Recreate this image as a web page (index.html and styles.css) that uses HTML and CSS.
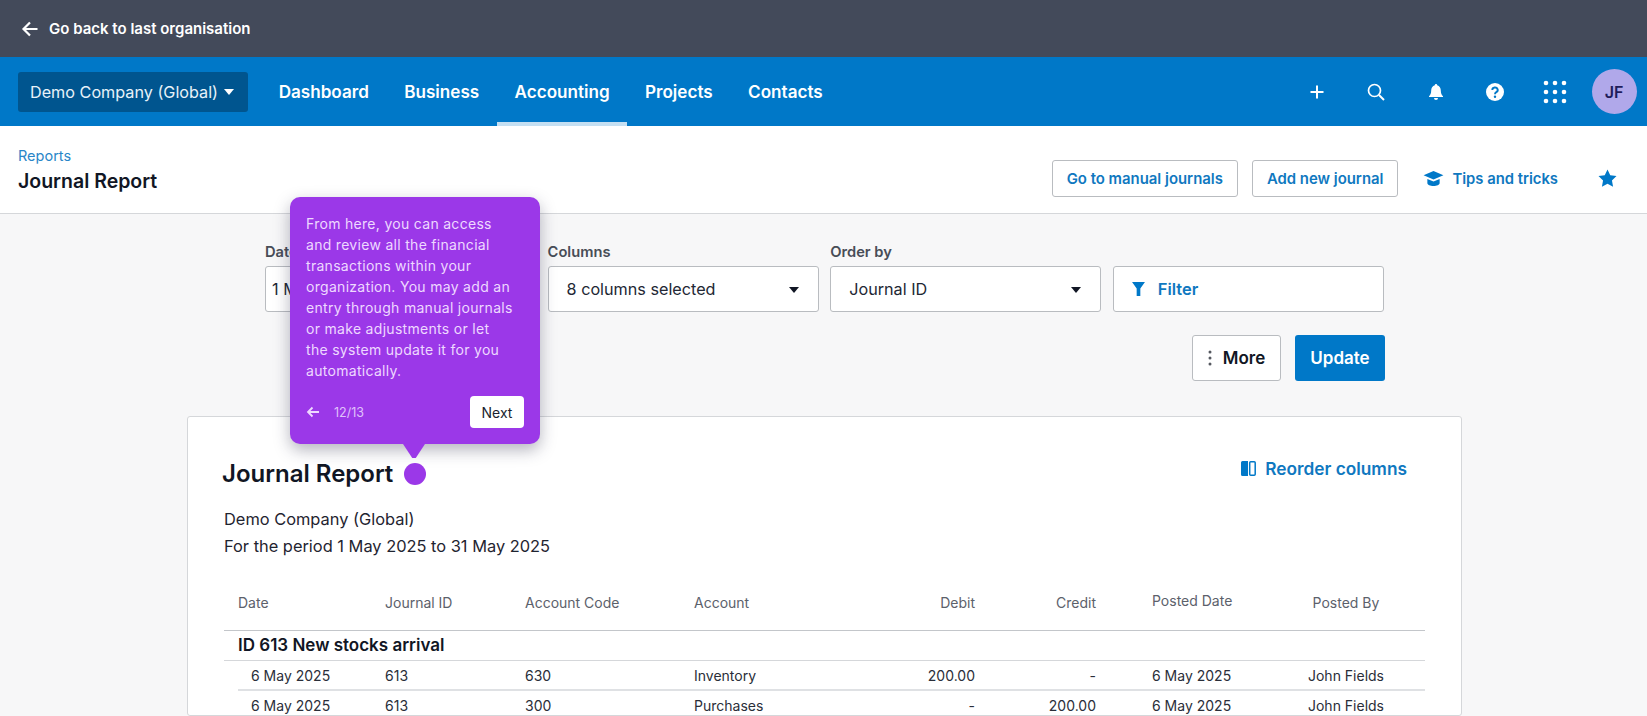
FILE: index.html
```html
<!DOCTYPE html>
<html lang="en">
<head>
<meta charset="utf-8">
<title>Journal Report</title>
<link rel="stylesheet" href="styles.css">
</head>
<body>
<div class="backbar">
  <svg class="back-arrow" viewBox="0 0 18 18" width="18" height="18"><path d="M16.5 9H3M9 2.5 2.5 9 9 15.5" fill="none" stroke="#fff" stroke-width="2.2"/></svg>
  <span>Go back to last organisation</span>
</div>
<nav class="topnav">
  <button class="org">Demo Company (Global)<span class="org-caret"></span></button>
  <a class="tab">Dashboard</a>
  <a class="tab">Business</a>
  <a class="tab active">Accounting</a>
  <a class="tab">Projects</a>
  <a class="tab">Contacts</a>
  <div class="nav-icons">
    <span class="nav-icon"><svg viewBox="0 0 16 16" width="16" height="16"><path d="M8 1.5v13M1.5 8h13" stroke="#fff" stroke-width="2"/></svg></span>
    <span class="nav-icon"><svg viewBox="0 0 18 18" width="18" height="18"><circle cx="7.5" cy="7.5" r="6" fill="none" stroke="#fff" stroke-width="1.7"/><path d="m12 12 5 5" stroke="#fff" stroke-width="2"/></svg></span>
    <span class="nav-icon"><svg viewBox="0 0 16 18" width="16" height="18"><path d="M8 1a1.2 1.2 0 0 1 1.2 1.3C11.6 3 12.8 5 12.8 7.500c0 3 .9 4.400 2.200 5.700v.8H1v-.8c1.300-1.300 2.200-2.700 2.200-5.700C3.200 5 4.400 3 6.800 2.300A1.200 1.200 0 0 1 8 1ZM6 15h4a2 2 0 0 1-4 0Z" fill="#fff"/></svg></span>
    <span class="nav-icon"><svg viewBox="0 0 18 18" width="18" height="18"><circle cx="9" cy="9" r="9" fill="#fff"/><path d="M6.300 7a2.700 2.500 0 1 1 4 2.200c-.9.500-1.300 1-1.300 2" fill="none" stroke="#0078c8" stroke-width="1.900"/><circle cx="9" cy="13.800" r="1.200" fill="#0078c8"/></svg></span>
    <span class="nav-icon"><svg viewBox="0 0 24 24" width="24" height="24" fill="#fff"><circle cx="3" cy="3" r="2.300"/><circle cx="12" cy="3" r="2.300"/><circle cx="21" cy="3" r="2.300"/><circle cx="3" cy="12" r="2.300"/><circle cx="12" cy="12" r="2.300"/><circle cx="21" cy="12" r="2.300"/><circle cx="3" cy="21" r="2.300"/><circle cx="12" cy="21" r="2.300"/><circle cx="21" cy="21" r="2.300"/></svg></span>
    <span class="avatar">JF</span>
  </div>
</nav>
<header class="pagehead">
  <div class="crumbs">
    <a class="crumb">Reports</a>
    <h1 class="pagetitle">Journal Report</h1>
  </div>
  <div class="head-actions">
    <button class="btn-outline">Go to manual journals</button>
    <button class="btn-outline">Add new journal</button>
    <a class="tips">
      <svg viewBox="0 0 22 18" width="21" height="17"><path d="M11 1 .5 5.500 11 10l10.500-4.500Z" fill="#0078c8"/><path d="M4.500 9.500v4.300c0 2 3 3.200 6.500 3.200s6.500-1.200 6.500-3.200V9.500L11 12.300Z" fill="#0078c8"/></svg>
      Tips and tricks
    </a>
    <svg class="star" viewBox="0 0 20 19" width="19" height="18"><path d="m10 .5 2.900 6.100 6.600.9-4.800 4.600 1.200 6.600L10 15.600l-5.900 3.100 1.200-6.600L.5 7.500l6.600-.9Z" fill="#0078c8"/></svg>
  </div>
</header>
<main class="content">
  <section class="filters">
    <div class="filter-grid">
      <div class="field"><label class="field-label">Date range</label><div class="select select-date">1 May 2025</div></div>
      <div class="field"><label class="field-label">Columns</label><div class="select">8 columns selected<span class="caret"></span></div></div>
      <div class="field"><label class="field-label">Order by</label><div class="select">Journal ID<span class="caret"></span></div></div>
      <div class="field"><span class="field-label">&nbsp;</span><div class="select filter-btn">
        <svg viewBox="0 0 12 13" width="13" height="14"><path d="M0 0h12L7.700 6v7H4.300V6Z" fill="#0078c8"/></svg>Filter</div></div>
    </div>
    <div class="filter-actions">
      <button class="btn-more"><svg viewBox="0 0 4 16" width="4" height="16" fill="#55585f"><circle cx="2" cy="2" r="1.500"/><circle cx="2" cy="8" r="1.500"/><circle cx="2" cy="14" r="1.500"/></svg>More</button>
      <button class="btn-update">Update</button>
    </div>
  </section>
  <section class="card">
    <div class="card-head">
      <h2 class="card-title">Journal Report</h2>
      <a class="reorder"><svg viewBox="0 0 15 15" width="15" height="15"><path d="M0 1.500A1.500 1.500 0 0 1 1.500 0H7v15H1.500A1.500 1.500 0 0 1 0 13.500Z" fill="#0078c8"/><rect x="8.700" y=".8" width="5.500" height="13.400" rx="1" fill="none" stroke="#0078c8" stroke-width="1.500"/></svg>Reorder columns</a>
    </div>
    <p class="meta">Demo Company (Global)</p>
    <p class="meta">For the period 1 May 2025 to 31 May 2025</p>
    <div class="report">
      <div class="row row-head">
        <span>Date</span><span>Journal ID</span><span>Account Code</span><span>Account</span>
        <span class="num">Debit</span><span class="num">Credit</span><span class="posted raised">Posted Date</span><span class="by">Posted By</span>
      </div>
      <div class="group">ID 613 New stocks arrival</div>
      <div class="row row-data">
        <span class="date">6 May 2025</span><span>613</span><span>630</span><span>Inventory</span>
        <span class="num">200.00</span><span class="num">-</span><span class="posted">6 May 2025</span><span class="by">John Fields</span>
      </div>
      <div class="row row-data">
        <span class="date">6 May 2025</span><span>613</span><span>300</span><span>Purchases</span>
        <span class="num">-</span><span class="num">200.00</span><span class="posted">6 May 2025</span><span class="by">John Fields</span>
      </div>
    </div>
  </section>
</main>
<aside class="tour">
  <p class="tour-text">From here, you can access<br>and review all the financial<br>transactions within your<br>organization. You may add an<br>entry through manual journals<br>or make adjustments or let<br>the system update it for you<br>automatically.</p>
  <div class="tour-foot">
    <svg viewBox="0 0 14 12" width="14" height="12"><path d="M13 6H2M6.500 1.500 2 6l4.500 4.500" fill="none" stroke="#eed9ff" stroke-width="1.800"/></svg>
    <span class="tour-count">12/13</span>
    <button class="tour-next">Next</button>
  </div>
</aside>
<span class="tour-dot"></span>
</body>
</html>
```

FILE: styles.css
```css
* { box-sizing: border-box; }
html, body { margin: 0; height: 716px; overflow: hidden; }
body {
  position: relative;
  background: #f7f7f8;
  font-family: Inter, "Liberation Sans", Arial, sans-serif;
  color: #1a1f2e;
}
button { font-family: inherit; cursor: pointer; }
h1, h2, p { margin: 0; }

.backbar {
  height: 57px;
  background: #434a5a;
  display: flex;
  align-items: center;
  gap: 10px;
  padding-left: 21px;
  color: #fff;
  font-size: 15px;
  font-weight: 600;
}

.topnav {
  height: 69px;
  background: #0078c8;
  display: flex;
  align-items: stretch;
  padding: 0 10.500px 0 18px;
  color: #fff;
}
.org {
  align-self: center;
  width: 230px;
  height: 40px;
  margin-right: 13px;
  background: #00558f;
  border: 0;
  border-radius: 3px;
  color: #e8f2f9;
  font-size: 16.200px;
  text-align: left;
  padding: 0 0 0 12px;
  display: flex;
  align-items: center;
  gap: 6px;
}
.org-caret {
  width: 0; height: 0;
  border-left: 5.500px solid transparent;
  border-right: 5.500px solid transparent;
  border-top: 6px solid #fff;
}
.tab {
  display: flex;
  align-items: center;
  padding: 0 17.700px;
  font-size: 17.100px;
  font-weight: 600;
}
.tab.active { box-shadow: inset 0 -4px 0 #c4dff2; }
.nav-icons { margin-left: auto; display: flex; align-items: center; }
.nav-icon {
  width: 59.500px;
  display: flex;
  justify-content: center;
  align-items: center;
}
.avatar {
  width: 45px;
  height: 45px;
  border-radius: 50%;
  margin-left: 7px;
  background: #b0a8ea;
  color: #1e1c5a;
  font-weight: 600;
  font-size: 16px;
  display: flex;
  align-items: center;
  justify-content: center;
}

.pagehead {
  height: 88px;
  background: #fff;
  border-bottom: 1px solid #d5d7da;
  display: flex;
  justify-content: space-between;
  padding: 21px 30px 0 18px;
}
.crumb { display: block; color: #2a86c8; font-size: 14.500px; line-height: 18px; }
.pagetitle { font-size: 19.500px; line-height: 24px; margin-top: 4px; font-weight: 600; color: #111624; }
.head-actions { display: flex; align-items: flex-start; padding-top: 13px; }
.btn-outline {
  height: 37px;
  background: #fff;
  border: 1px solid #b9bcc0;
  border-radius: 3px;
  color: #0f78c0;
  font-size: 14.900px;
  font-weight: 600;
  padding: 0 14px;
  margin-right: 14px;
}
.tips {
  display: flex;
  align-items: center;
  gap: 8px;
  height: 37px;
  margin-left: 11px;
  color: #0f78c0;
  font-size: 14.800px;
  font-weight: 600;
}
.star { margin: 9px 0 0 40px; }

.filters { padding: 28px 262px 35px 265px; }
.filter-grid { display: grid; grid-template-columns: repeat(4, 271px); column-gap: 11.600px; }
.field-label { display: block; height: 20px; line-height: 20px; margin-bottom: 4px; font-size: 14.700px; font-weight: 600; color: #484d57; }
.select {
  position: relative;
  height: 46px;
  background: #fff;
  border: 1px solid #b9bcc0;
  border-radius: 3px;
  display: flex;
  align-items: center;
  padding: 0 18px;
  font-size: 16.200px;
  color: #222734;
}
.select-date { padding-left: 6px; }
.caret {
  position: absolute;
  right: 19px;
  top: 20px;
  width: 0; height: 0;
  border-left: 5.500px solid transparent;
  border-right: 5.500px solid transparent;
  border-top: 6px solid #111624;
}
.filter-btn { color: #0f78c0; font-weight: 600; gap: 13px; font-size: 16.500px; }
.filter-actions { display: flex; justify-content: flex-end; gap: 14px; margin-top: 23px; }
.btn-more {
  width: 89px;
  height: 46px;
  background: #fff;
  border: 1px solid #b9bcc0;
  border-radius: 3px;
  font-size: 17px;
  font-weight: 600;
  color: #111624;
  display: flex;
  align-items: center;
  justify-content: center;
  gap: 11px;
}
.btn-update {
  width: 90px;
  height: 46px;
  background: #0078c8;
  border: 0;
  border-radius: 3px;
  color: #fff;
  font-size: 17px;
  font-weight: 600;
}

.card {
  width: 1275px;
  height: 300px;
  margin-left: 187px;
  background: #fff;
  border: 1px solid #d5d7da;
  border-radius: 3px;
  padding: 42px 36px 0;
}
.card-head { display: flex; justify-content: space-between; height: 30px; margin-bottom: 17px; }
.card-title { font-size: 24px; line-height: 30px; font-weight: 600; color: #111624; margin-left: -2px; }
.reorder {
  display: flex;
  align-items: center;
  gap: 9px;
  height: 18px;
  margin-right: 18px;
  color: #0f78c0;
  font-size: 17.300px;
  font-weight: 600;
}
.meta { font-size: 16.400px; line-height: 27px; color: #1f2430; }
.report { margin-top: 16px; width: 1201px; }
.row {
  display: grid;
  grid-template-columns: 147px 140px 169px 166px 115px 121px 171px 158px;
  margin-left: 14px;
  align-items: center;
  font-size: 14px;
}
.row-head { height: 55px; padding-bottom: 1px; color: #5c616b; margin-left: 0; padding-left: 14px; border-bottom: 1px solid #c3c6ca; }
.group {
  height: 30px;
  display: flex;
  align-items: center;
  padding: 0 0 2px 14px;
  font-size: 17px;
  font-weight: 600;
  color: #111624;
  border-bottom: 1px solid #d5d7da;
}
.row-data { height: 30px; color: #2a2e39; border-bottom: 2px solid #dfe1e4; }
.date { padding-left: 13px; }
.num { text-align: right; }
.posted { padding-left: 56px; }
.raised { position: relative; top: -2px; }
.by { text-align: center; }

.tour {
  position: absolute;
  left: 290px;
  top: 197px;
  width: 250px;
  height: 247px;
  padding: 16px 16px 16px;
  border-radius: 10px;
  background: #9b38e8;
  box-shadow: 0 6px 16px rgba(40, 40, 70, .35);
}
.tour::after {
  content: "";
  position: absolute;
  left: 113px;
  bottom: -14px;
  width: 22px;
  height: 14px;
  background: #9b38e8;
  clip-path: polygon(0 0, 100% 0, 58% 100%, 42% 100%);
}
.tour-text { font-size: 14px; line-height: 21px; color: #eed9ff; white-space: nowrap; letter-spacing: .3px; }
.tour-foot { position: absolute; left: 16px; right: 16px; top: 199px; height: 32px; display: flex; align-items: center; }
.tour-count { margin-left: 14px; font-size: 12.500px; color: #e0c2fb; }
.tour-next {
  margin-left: auto;
  width: 54px;
  height: 32px;
  background: #fff;
  border: 0;
  border-radius: 4px;
  font-size: 14px;
  color: #1a1f2e;
}
.tour-dot {
  position: absolute;
  left: 404px;
  top: 463px;
  width: 22px;
  height: 22px;
  border-radius: 50%;
  background: #9b38e8;
}
```
